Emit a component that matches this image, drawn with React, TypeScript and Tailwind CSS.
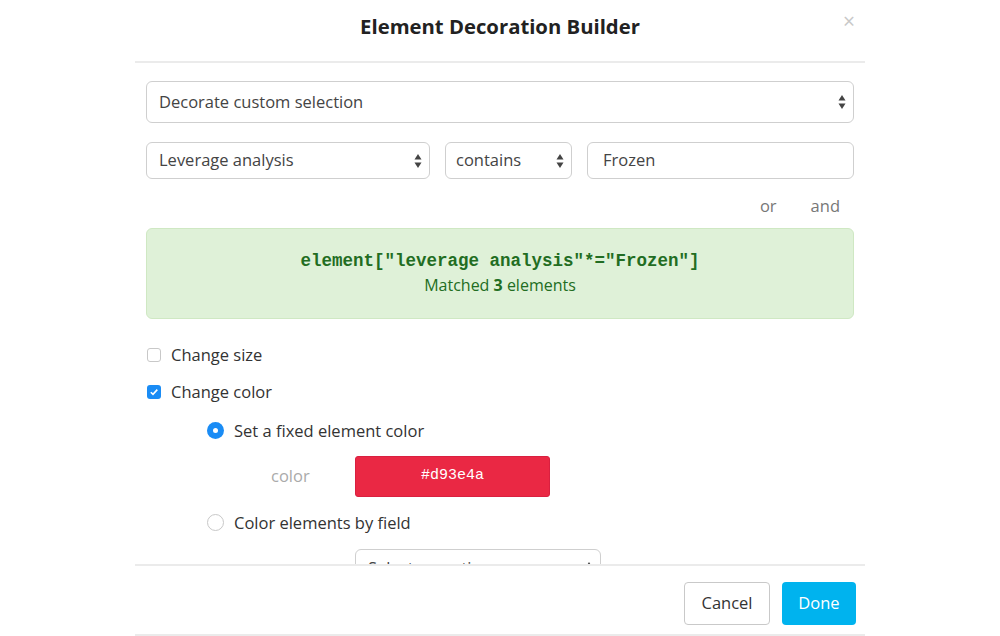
import React from 'react';

const font = { fontFamily: '"Open Sans", Lato, sans-serif' };

function Arrows() {
    return (
        <svg width="8" height="16" viewBox="0 0 8 16" className="shrink-0">
            <path d="M4 1 L7.5 6.5 L0.5 6.5 Z" fill="#444" />
            <path d="M4 15 L7.5 9.5 L0.5 9.5 Z" fill="#444" />
        </svg>
    );
}

function Select({ label, className }: { label: string; className: string }) {
    return (
        <div
            className={`flex items-center justify-between rounded-md border border-[#cfcfcf] bg-white pl-3 pr-[7px] text-[16.5px] text-[#444] ${className}`}
        >
            <span>{label}</span>
            <Arrows />
        </div>
    );
}

function Checkbox({ checked, label }: { checked: boolean; label: string }) {
    return (
        <div className="flex h-[24px] items-center gap-[10px] pl-[1px]">
            {checked ? (
                <span className="flex h-[14px] w-[14px] items-center justify-center rounded-[3px] bg-[#1a8cf5]">
                    <svg width="10" height="10" viewBox="0 0 10 10">
                        <path d="M1.8 5.2 L4 7.4 L8.3 2.6" fill="none" stroke="#fff" strokeWidth="1.6" />
                    </svg>
                </span>
            ) : (
                <span className="h-[14px] w-[14px] rounded-[3px] border border-[#c8c8c8] bg-white" />
            )}
            <span className="text-[16.5px] leading-[24px] text-[#333]">{label}</span>
        </div>
    );
}

function Radio({ checked, label }: { checked: boolean; label: string }) {
    return (
        <div className="flex h-[24px] items-center gap-[10px]">
            {checked ? (
                <span className="flex h-[17px] w-[17px] items-center justify-center rounded-full bg-[#1a8cf5]">
                    <span className="h-[5px] w-[5px] rounded-full bg-white" />
                </span>
            ) : (
                <span className="h-[17px] w-[17px] rounded-full border border-[#c8c8c8] bg-white" />
            )}
            <span className="text-[16.5px] leading-[24px] text-[#333]">{label}</span>
        </div>
    );
}

export default function App() {
    return (
        <div className="flex h-[636px] w-[1000px] justify-center bg-white" style={font}>
            <div className="flex w-[730px] flex-col">
                <div className="relative flex h-[63px] shrink-0 items-center justify-center border-b-2 border-[#ebebeb]">
                    <h1 className="mt-[-9px] text-[20.3px] font-bold text-[#222]">Element Decoration Builder</h1>
                    <span className="absolute right-[10px] top-[11px] text-[21px] leading-none text-[#c8c8c8]">×</span>
                </div>

                <div className="flex-1 overflow-hidden px-[11px] pt-[18px]">
                    <Select label="Decorate custom selection" className="h-[42px] w-full" />

                    <div className="mt-[19px] flex gap-[15px]">
                        <Select label="Leverage analysis" className="h-[37px] w-[284px]" />
                        <Select label="contains" className="h-[37px] w-[127px] pl-[10px]" />
                        <div className="flex h-[37px] flex-1 items-center rounded-md border border-[#cfcfcf] px-[15px] text-[16.5px] text-[#444]">
                            Frozen
                        </div>
                    </div>

                    <div className="mt-[15px] flex justify-end gap-[34px] pr-[14px] text-[16.5px] text-[#777]">
                        <span>or</span>
                        <span>and</span>
                    </div>

                    <div className="mt-[9px] flex h-[91px] flex-col items-center justify-center rounded-md border border-[#cfe8c3] bg-[#dff1d8] text-[#226d22]">
                        <div className="text-[17.5px] font-bold leading-[24px]" style={{ fontFamily: '"Liberation Mono", monospace' }}>
                            element["leverage analysis"*="Frozen"]
                        </div>
                        <div className="text-[16px] leading-[24px]">
                            Matched <b>3</b> elements
                        </div>
                    </div>

                    <div className="mt-[24px] flex flex-col gap-[13px]">
                        <Checkbox checked={false} label="Change size" />
                        <Checkbox checked label="Change color" />
                    </div>

                    <div className="mt-[15px] pl-[61px]">
                        <Radio checked label="Set a fixed element color" />
                        <div className="mt-[13px] flex items-center">
                            <span className="w-[148px] pl-[64px] text-[16.5px] text-[#aaa]">color</span>
                            <div
                                className="flex h-[41px] w-[195px] items-center justify-center rounded-[3px] border border-[#d92040] bg-[#ea2844] text-[15px] text-white"
                                style={{ fontFamily: '"Liberation Mono", monospace' }}
                            >
                                #d93e4a
                            </div>
                        </div>
                        <div className="mt-[14px]">
                            <Radio checked={false} label="Color elements by field" />
                        </div>
                        <div className="ml-[148px] mt-[14px]">
                            <Select label="Select an option" className="h-[40px] w-[246px]" />
                        </div>
                    </div>
                </div>

                <div className="flex h-[72px] shrink-0 items-start justify-end gap-[12px] border-y-2 border-[#ebebeb] px-[9px] pt-[16px]">
                    <button className="h-[43px] w-[86px] rounded-[4px] border border-[#c9c9c9] bg-white text-[16.5px] text-[#333]">
                        Cancel
                    </button>
                    <button className="h-[43px] w-[74px] rounded-[4px] bg-[#00b3ee] text-[16.5px] text-white">Done</button>
                </div>
            </div>
        </div>
    );
}
